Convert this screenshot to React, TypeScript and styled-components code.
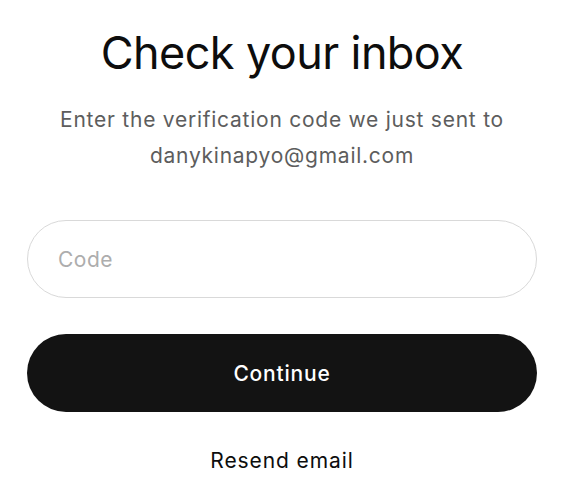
import React from "react";
import styled, { createGlobalStyle } from "styled-components";

const Global = createGlobalStyle`
  html, body {
    margin: 0;
    padding: 0;
    background: #ffffff;
  }
  body {
    font-family: Inter, "Noto Sans", "Liberation Sans", sans-serif;
    -webkit-font-smoothing: antialiased;
  }
`;

const Page = styled.main`
  display: flex;
  flex-direction: column;
  align-items: stretch;
  width: 510px;
  margin-left: 27px;
  padding-top: 26px;
`;

const Title = styled.h1`
  margin: 0;
  font-size: 45px;
  font-weight: 400;
  line-height: 54px;
  letter-spacing: -0.6px;
  color: #0d0d0d;
  text-align: center;
`;

const Subtitle = styled.p`
  margin: 22px 0 0;
  font-size: 21px;
  line-height: 36px;
  letter-spacing: 0.75px;
  color: #5d5d5d;
  text-align: center;
`;

const Field = styled.input`
  box-sizing: border-box;
  margin-top: 46px;
  height: 78px;
  width: 100%;
  padding: 0 30px;
  border: 1px solid #d9d9d9;
  border-radius: 39px;
  font-family: inherit;
  font-size: 21px;
  letter-spacing: 0.5px;
  color: #0d0d0d;
  outline: none;
  &::placeholder {
    color: #adadad;
  }
`;

const PrimaryButton = styled.button`
  margin-top: 36px;
  height: 78px;
  width: 100%;
  border: none;
  border-radius: 39px;
  background: #131313;
  color: #ffffff;
  font-family: inherit;
  font-size: 21px;
  font-weight: 500;
  letter-spacing: 0.8px;
  cursor: pointer;
`;

const LinkButton = styled.button`
  align-self: center;
  margin-top: 34px;
  padding: 0;
  border: none;
  background: none;
  color: #0d0d0d;
  font-family: inherit;
  font-size: 21px;
  line-height: 30px;
  letter-spacing: 0.9px;
  cursor: pointer;
`;

export default function App() {
  return (
    <>
      <Global />
      <Page>
        <Title>Check your inbox</Title>
        <Subtitle>
          Enter the verification code we just sent to
          <br />
          danykinapyo@gmail.com
        </Subtitle>
        <Field placeholder="Code" />
        <PrimaryButton>Continue</PrimaryButton>
        <LinkButton>Resend email</LinkButton>
      </Page>
    </>
  );
}
